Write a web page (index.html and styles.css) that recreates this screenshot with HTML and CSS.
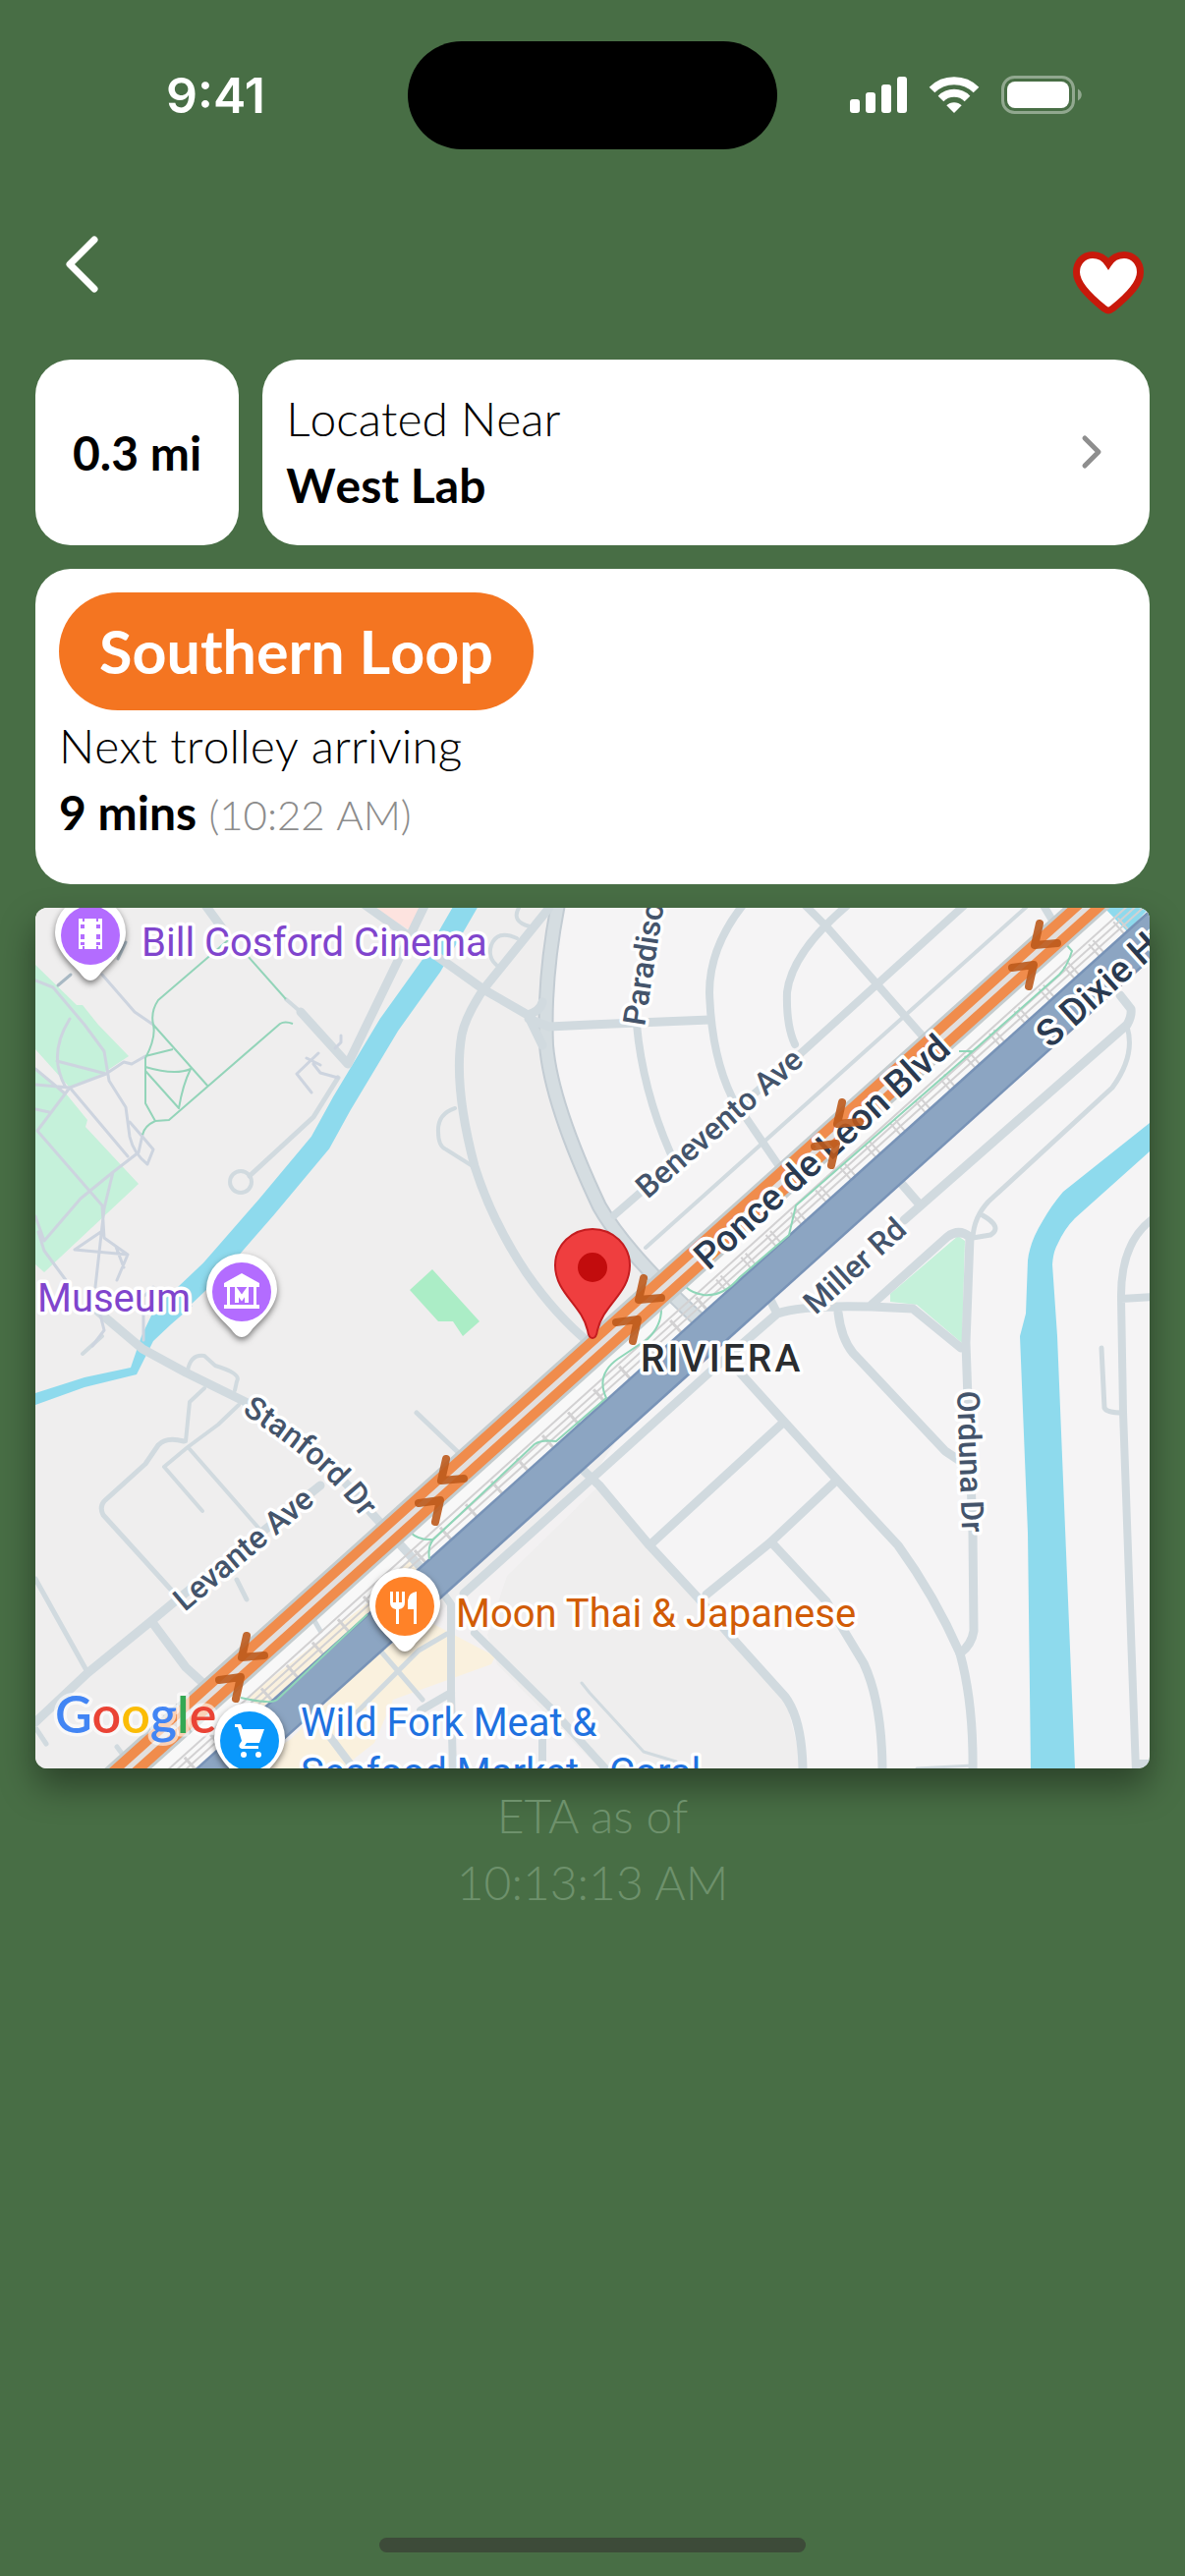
FILE: index.html
```html
<!DOCTYPE html>
<html lang="en">
<head>
<meta charset="utf-8">
<meta name="viewport" content="width=device-width, initial-scale=1">
<title>West Lab stop</title>
<link rel="stylesheet" href="styles.css">
</head>
<body>
<div class="status">
  <div class="status-time">9:41</div>
  <div class="island"></div>
  <div class="status-icons">
    <svg width="58" height="38" viewBox="0 0 58 38" fill="#fff" aria-hidden="true">
      <rect x="0" y="24" width="10" height="14" rx="3"/><rect x="16" y="17" width="10" height="21" rx="3"/>
      <rect x="32" y="9" width="10" height="29" rx="3"/><rect x="48" y="1" width="10" height="37" rx="3"/>
    </svg>
    <svg width="52" height="38" viewBox="0 0 52 38" aria-hidden="true">
      <g fill="none" stroke="#fff" stroke-width="8"><path d="M3.500 14.500A32 32 0 0 1 48.500 14.500"/><path d="M12.500 23.500A19 19 0 0 1 39.500 23.500"/></g>
      <path d="M26 38L18.300 30.300A11 11 0 0 1 33.700 30.300Z" fill="#fff"/>
    </svg>
    <svg width="82" height="39" viewBox="0 0 82 39" aria-hidden="true">
      <rect x="1.500" y="1.500" width="72" height="36" rx="12" fill="none" stroke="#fff" stroke-opacity=".4" stroke-width="3"/>
      <rect x="6" y="6" width="63" height="27" rx="8" fill="#fff"/>
      <path d="M78 13.500C83 16 83 23 78 25.500Z" fill="#fff" fill-opacity=".4"/>
    </svg>
  </div>
</div>

<header class="topbar">
  <button class="icon-button" type="button" aria-label="Back">
    <svg width="34" height="58" viewBox="0 0 34 58" fill="none" stroke="#fff" stroke-width="7" stroke-linecap="round" stroke-linejoin="round"><path d="M30 4L5 29L30 54"/></svg>
  </button>
  <button class="icon-button favorite" type="button" aria-label="Remove from favorites">
    <svg width="72" height="64" viewBox="0 0 72 64"><path d="M36 60C34 60 33 59 31 57.500C13 43 3.500 32 3.500 21C3.500 11 10.500 3.500 20 3.500C27 3.500 32.500 7 36 12.500C39.500 7 45 3.500 52 3.500C61.500 3.500 68.500 11 68.500 21C68.500 32 59 43 41 57.500C39 59 38 60 36 60Z" fill="#fff" stroke="#c8190b" stroke-width="7"/></svg>
  </button>
</header>

<main class="content">
  <div class="stop-row">
    <div class="card distance">0.3 mi</div>
    <a class="card place" href="#stop">
      <span class="place-text"><span class="light">Located Near</span><strong>West Lab</strong></span>
      <svg width="22" height="36" viewBox="0 0 22 36" fill="none" stroke="#8e8e8e" stroke-width="5" stroke-linecap="round" stroke-linejoin="round" aria-hidden="true"><path d="M4 4L18 18L4 32"/></svg>
    </a>
  </div>

  <section class="card arrival">
    <h1 class="route">Southern Loop</h1>
    <p class="light">Next trolley arriving</p>
    <p class="eta"><strong>9 mins</strong> <span class="clock">(10:22 AM)</span></p>
  </section>

  <section class="map" aria-label="Map of the stop">
    <svg class="map-art" viewBox="0 0 1134 876">
      <defs>
        <path id="pin" d="M0 46C-4 46 -7 43 -10 39C-15 32 -36 17 -36 -3A36 36 0 0 1 36 -3C36 17 15 32 10 39C7 43 4 46 0 46Z"/>
        <path id="chevrons" d="M6 -32L1 -10L24 -12M-22 13L0 10L-5 32"/>
        <path id="stanford" d="M210 514C253 543 302 575 343 636"/>
      </defs>

      <!-- ground -->
      <rect width="1134" height="876" fill="#f5f4f5"/>
      <path fill="#efeeee" d="M0 0H532L519 86L521 146L538 219L574 306L614 363L675 419L564 583L675 703L763 803L781 876H0Z"/>
      <path fill="#f8f8f8" d="M1069 0H1134V28L192 876H94Z"/>
      <path fill="#f5f4f5" d="M192 876L436 698L564 583L574 588L480 680L460 740L470 770L574 876Z" opacity=".6"/>
      <path fill="#faf1de" d="M382 663L395 672L230 815L216 803L340 706ZM405 729L468 762L464 770L364 806L345 850L312 876H215L260 846L349 756Z"/>
      <path fill="#fde3df" d="M345 0H395L381 23Z"/>
      <g fill="#c5f1da">
        <path d="M0 58L42 99L48 99L64 119L95 151L68 169L35 183L0 144ZM0 164L31 189L53 216L51 223L105 281L9 371L0 363Z"/>
        <path d="M939 334L946 339L943 443L897 404L870 401V393Z"/>
        <path fill="#abedc6" d="M404 368L452 421L435 436L425 421H410L381 389Z"/>
      </g>

      <!-- water -->
      <path fill="none" stroke="#8edaed" stroke-width="22" stroke-linejoin="round" d="M444 -12L403 59L360 119L312 199L290 239L234 306L179 369L140 406"/>
      <path fill="#8edaed" d="M131 396L118 415L108 436L97 468L50 478L0 494V506L50 488L103 475L120 441L138 424L160 405Z"/>
      <path fill="#8edaed" d="M1134 219L1046 289Q1034 303 1025 319Q1012 340 1010 359L1008 413L1002 436L1010 636L1013 876H1058L1040 436L1035 363Q1036 350 1040 343Q1047 327 1058 316L1134 248ZM1088 0L1111 24L1134 0Z"/>

      <!-- streets -->
      <g fill="none" stroke="#d1dadf" stroke-linejoin="round" stroke-linecap="round">
        <path stroke="#c3ccd3" stroke-width="16" d="M533 -9Q517 70 520 140Q525 200 574 304Q600 350 675 419"/>
        <path stroke="#d5dde1" stroke-width="12" d="M533 -9Q517 70 520 140Q525 200 574 304Q600 350 675 419"/>
        <path stroke-width="9" d="M523 0L456 83Q438 110 434 129Q425 180 447 263Q465 320 500 372Q530 415 564 443M334 -4L456 83L501 109L516 140M501 109Q514 105 516 96M502 113L523 121L564 119L686 114M172 -4L194 26M397 -4L318 159L270 106"/>
        <path stroke-width="8" d="M721 -4Q686 40 686 86Q688 150 709 193L759 266M828 -4Q770 45 765 86Q764 120 773 139M782 -4L805 19L855 76L905 133M947 -4L778 149L589 313M1025 -4L1037 16M612 119Q618 185 646 249"/>
        <path stroke-width="9" d="M64 411L109 449L153 473L216 504M216 504Q290 550 342 616L392 671M290 588L142 706L118 726L53 779L0 829M118 726L153 773L177 795"/>
        <path stroke-width="9" d="M436 698L564 583L686 473L732 433L755 413Q780 404 851 406L893 408L942 448M748 399L755 413M556 571L574 588L625 649L675 703L709 743L763 803Q780 826 781 876M717 473L763 524L813 579L878 649Q915 700 941 759Q955 810 954 880M761 524L625 649M815 583L748 646L683 699M752 649L805 706L843 769Q862 810 862 880M817 412Q820 438 832 453L926 553L941 563"/>
        <path stroke-width="9" d="M851 404L928 335Q940 326 951 335L947 443L949 500L954 636L955 736Q953 750 941 759M884 318L1111 119Q1116 110 1115 103L1104 89M880 279L899 301"/>
        <path stroke-width="8" d="M1138 316Q1104 340 1105 398L1107 513L1120 880M1105 398L1138 396M1122 871H1138"/>
        <path stroke-width="8" d="M416 699L423 709V799L425 880M423 799L392 817M447 738L523 813L580 876M297 840L327 880M516 843V880"/>
        <path stroke-width="5" d="M308 173L283 213L218 273M0 683L53 778M1 836L11 851M83 854L92 866M388 514L432 556M283 724L290 736M151 543Q133 538 125 547L112 566L70 604Q65 610 69 618L138 694M205 684L215 704M351 756L394 806M419 739L390 756L327 819M1085 448L1088 509Q1090 514 1107 514M1111 121Q1120 150 1096 183L970 299Q955 315 954 336M964 313Q985 325 972 333L954 336"/>
        <path stroke-width="4" d="M1012 -4L621 346M490 31Q470 22 464 38Q460 50 469 58M492 0Q484 14 503 19M427 204Q409 210 410 228Q410 243 418 246L445 263M155 471Q158 454 172 456L183 466Q210 474 205 482L203 491M172 489L157 503L153 543M207 506L186 526L155 549L131 569L170 614M157 551L227 631M68 436L48 454M255 93L270 106"/>
        <path stroke-width="3" d="M556 789L564 799L619 859L652 869M897 876L954 873"/>
        <circle cx="209" cy="279" r="11" stroke-width="4"/>
      </g>

      <!-- footpaths -->
      <g fill="none" stroke="#cdd4df" stroke-width="3" stroke-linejoin="round" stroke-linecap="round">
        <path d="M-2 73L18 81L50 119L70 146L75 176L92 203L96 233Q100 250 114 261L120 246L109 233L96 218M120 119L101 106L68 68M112 151L98 159L90 157L72 169L35 183L2 227L68 303L70 336L94 353L83 379M35 183L94 253M35 113Q12 150 31 183M22 156L72 169M0 180L35 183M0 205L14 208M109 231L105 249L79 269L46 296L9 339L0 314M79 269L70 306L61 386M68 329L40 348L94 353M3 330L9 349L31 379M0 164L30 189M82 345L90 366M66 414L70 430L58 446M120 386L110 396V440M288 148L266 169L281 188M283 159L290 168L308 173M276 153L290 160M311 130V137L305 143"/>
        <path stroke="#a9b9c4" d="M23 79L36 68M84 52L92 35"/>
      </g>
      <g fill="none" stroke="#93d4b9" stroke-width="2" stroke-linejoin="round">
        <path d="M196 33L125 94Q117 106 120 119L176 182M120 119Q123 132 112 153V199L122 217L136 216L249 118Q254 115 262 118M122 217Q111 222 109 231M112 151L140 144M112 162Q142 171 158 164Q150 180 146 204L112 166M255 93L216 49"/>
      </g>

      <!-- railway -->
      <g fill="none" stroke="#d2d1d2">
        <path stroke-width="2" d="M1134 -14L122 897M1134 -6L122 905M1134 -22L122 889"/>
        <path stroke-width="19" stroke-dasharray="2 4 2 26" d="M1134 -6L680 403"/>
        <path stroke-width="20" stroke-dasharray="3 32" d="M680 403L122 905"/>
      </g>

      <!-- highway -->
      <g fill="none">
        <path stroke="#7893b7" stroke-width="39" d="M172 894L1154 10"/>
        <path stroke="#8ca5c2" stroke-width="34" d="M172 894L1154 10"/>
      </g>
      <path fill="none" stroke="#8fd6b8" stroke-width="2" d="M1048 36L1055 44Q1050 60 1042 68L954 146L774 303L767 333L717 376Q700 396 680 394Q668 392 662 386M954 146H940M637 406Q638 425 623 439L593 459Q570 475 581 499L530 543Q515 541 508 546L405 643Q399 650 401 663M405 643Q390 644 382 636M338 719L246 806Q240 811 209 804"/>

      <!-- trolley route -->
      <g fill="none">
        <path stroke="#c4ccce" stroke-width="32" d="M72 896L1092 -20"/>
        <path stroke="#e2dfde" stroke-width="10" d="M72 896L1092 -20"/>
        <path stroke="#f08c4c" stroke-width="10" d="M67 890L1087 -26M77 902L1097 -14"/>
      </g>

      <!-- street names -->
      <g class="street">
        <text transform="translate(620 121) rotate(-81)">Paradiso</text>
        <text transform="translate(623 297) rotate(-41)">Benevento Ave</text>
        <text transform="translate(794 415) rotate(-42)">Miller Rd</text>
        <text transform="translate(938 492) rotate(88)">Orduna Dr</text>
        <text transform="translate(152 717) rotate(-40)">Levante Ave</text>
        <text><textPath href="#stanford">Stanford Dr</textPath></text>
      </g>
      <g class="street major">
        <text transform="translate(685 370) rotate(-42)">Ponce de Leon Blvd</text>
        <text transform="translate(1033 144) rotate(-42)">S Dixie Hwy</text>
      </g>

      <g fill="none" stroke="#bd5a1c" stroke-opacity=".9" stroke-width="8" stroke-linecap="round" stroke-linejoin="round">
        <use href="#chevrons" x="209" y="773"/><use href="#chevrons" x="412" y="593"/><use href="#chevrons" x="613" y="409"/>
        <use href="#chevrons" x="815" y="230"/><use href="#chevrons" x="1016" y="48"/>
      </g>

      <!-- places -->
      <text class="area" x="616" y="472">RIVIERA</text>
      <g class="poi">
        <text class="culture" x="108" y="49">Bill Cosford Cinema</text>
        <text class="culture" x="2" y="411">Museum</text>
        <text class="food" x="428" y="732">Moon Thai &amp; Japanese</text>
        <text class="shop" x="270" y="843">Wild Fork Meat &amp;</text>
        <text class="shop" x="270" y="894">Seafood Market - Coral</text>
      </g>
      <text class="brand" x="20" y="840"><tspan fill="#4285f4">G</tspan><tspan fill="#ea4335">o</tspan><tspan fill="#fbbc05">o</tspan><tspan fill="#4285f4">g</tspan><tspan fill="#34a853">l</tspan><tspan fill="#ea4335">e</tspan></text>

      <g class="badge" transform="translate(56 28)">
        <use href="#pin" fill="#fff"/><circle r="30" fill="#b36cff"/>
        <path fill="#fff" d="M-12 -17H-8V-14H-6V-17H6V-14H8V-17H12V14H8V11H6V14H-6V11H-8V14H-12Z"/>
        <path fill="#b36cff" d="M-10 -11H-6V-7H-10ZM-10 -1H-6V4H-10ZM-10 7H-6V10H-10ZM6 -11H10V-7H6ZM6 -1H10V4H6ZM6 7H10V10H6Z"/>
      </g>
      <g class="badge" transform="translate(210 391)">
        <use href="#pin" fill="#fff"/><circle r="30" fill="#b36cff"/>
        <path fill="#fff" d="M0 -19L18 -9V-5H15V13H18V17H-18V13H-15V-5H-18V-9ZM-12 -5V13H12V-5Z" fill-rule="evenodd"/>
        <path fill="none" stroke="#fff" stroke-width="4" d="M-5 11V-1L0 6L5 -1V11"/>
      </g>
      <g class="badge" transform="translate(376 711)">
        <use href="#pin" fill="#fff"/><circle r="30" fill="#ff8228"/>
        <path fill="#fff" d="M-15 -15H-12V-4H-9V-15H-6V-4H-3V-15H0V-4Q0 2 -6 3V18H-9V3Q-15 2 -15 -4ZM3 3V-6Q4 -14 12 -15V18H9V3Z"/>
      </g>
      <g class="badge" transform="translate(218 848)">
        <use href="#pin" fill="#fff"/><circle r="30" fill="#0a98fb"/>
        <path fill="#fff" d="M-15 -17H-9L-7 -12H15L10 2H-3L-5 5H9V8H-8Q-12 7 -10 3L-8 0L-12 -14H-15Z"/>
        <circle cx="-6" cy="14" r="3" fill="#fff"/><circle cx="9" cy="14" r="3" fill="#fff"/>
      </g>
      <path fill="#ef3e3f" stroke="#c41c1f" stroke-width="2" d="M567 438Q563 438 562 430C556 404 529 392 529 364A38 37 0 0 1 605 364C605 392 578 404 572 430Q571 438 567 438Z"/>
      <circle cx="567" cy="366" r="15" fill="#c20c0d"/>
    </svg>
  </section>

  <p class="updated">ETA as of<br>10:13:13 AM</p>
</main>

<div class="home-indicator"></div>
</body>
</html>
```
FILE: styles.css
```css
* {
  box-sizing: border-box;
}

body {
  margin: 0;
  min-height: 100vh;
  display: flex;
  flex-direction: column;
  background: #486e45;
  color: #000;
  font-family: Lato, "Liberation Sans", sans-serif;
  font-size: 48px;
  line-height: 68px;
}

p,
h1 {
  margin: 0;
}

.status {
  display: grid;
  grid-template-columns: 1fr 376px 1fr;
  align-items: center;
  padding-top: 42px;
  color: #fff;
}

.status-time {
  justify-self: center;
  padding-left: 24px;
  font: 600 50px/60px Inter, sans-serif;
}

.island {
  height: 110px;
  border-radius: 55px;
  background: #000;
}

.status-icons {
  justify-self: center;
  display: flex;
  align-items: center;
  gap: 22px;
  padding-right: 32px;
  padding-bottom: 2px;
}

.topbar {
  display: flex;
  justify-content: space-between;
  align-items: flex-start;
  padding: 80px 42px 0 66px;
  height: 214px;
}

.icon-button {
  display: flex;
  padding: 8px 0;
  border: 0;
  background: none;
}

.favorite {
  margin-top: 16px;
}

.content {
  display: flex;
  flex-direction: column;
  gap: 24px;
  padding: 0 36px;
}

.stop-row {
  display: grid;
  grid-template-columns: auto 1fr;
  gap: 24px;
}

.card {
  border-radius: 36px;
  background: #fff;
  font-kerning: none;
}

.distance {
  display: flex;
  align-items: center;
  padding: 0 38px;
  font-weight: 700;
}

.place {
  display: flex;
  align-items: center;
  justify-content: space-between;
  padding: 26px 48px 27px 24px;
  color: inherit;
  text-decoration: none;
}

.place-text {
  display: grid;
}

strong {
  font-weight: 700;
}

.light {
  font-weight: 300;
}

.arrival {
  padding: 24px 24px 39px;
}

.route {
  width: fit-content;
  padding: 0 41px;
  border-radius: 60px;
  background: #f47521;
  color: #fff;
  font-size: 61px;
  font-weight: 700;
  line-height: 120px;
  margin-bottom: 2px;
}

.clock {
  color: #8c8c8c;
  font-size: 42px;
  font-weight: 300;
  line-height: 48px;
}

.map {
  border-radius: 12px;
  overflow: hidden;
  box-shadow: 0 18px 36px rgba(0, 0, 0, 0.4);
}

.map-art {
  display: block;
  width: 100%;
  height: auto;
}

.map-art text {
  font-family: Roboto, "Liberation Sans", sans-serif;
  stroke: #fff;
  stroke-width: 7px;
  stroke-linejoin: round;
  paint-order: stroke;
}

.street text {
  font-size: 32px;
  font-weight: 500;
  fill: #44546b;
}

.major text {
  font-size: 38px;
  fill: #2a3a50;
}

.map-art .area {
  font-size: 39px;
  font-weight: 500;
  letter-spacing: 3px;
  fill: #2b2d30;
}

.poi text {
  font-size: 40px;
}

.poi .culture {
  fill: #8045cd;
}

.poi .food {
  fill: #d15c06;
}

.poi .shop {
  fill: #1f72e0;
}

.map-art .brand {
  font-family: Lato, sans-serif;
  font-size: 52px;
  font-weight: 600;
  stroke-opacity: 0.6;
}

.badge {
  filter: drop-shadow(0 3px 3px rgba(0, 0, 0, 0.5));
}

.updated {
  margin-top: -10px;
  color: #6e916c;
  font-weight: 300;
  text-align: center;
}

.home-indicator {
  width: 36%;
  height: 15px;
  margin: auto auto 24px;
  border-radius: 8px;
  background: #3d4b39;
}
```
